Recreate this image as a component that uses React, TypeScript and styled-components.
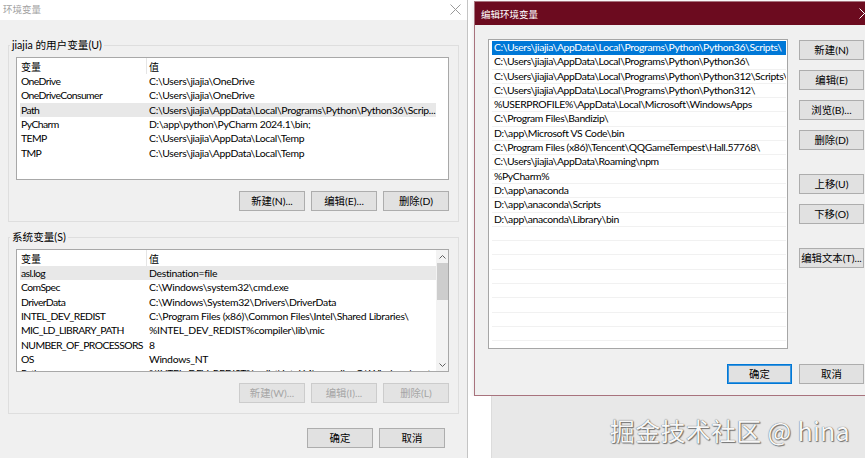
import styled, { createGlobalStyle } from "styled-components";

const UI = `"Lato", "Noto Sans CJK SC", sans-serif`;
const CJK = `"Noto Sans CJK SC", "Lato", sans-serif`;

const GlobalStyle = createGlobalStyle`
  html, body {
    margin: 0;
    padding: 0;
  }
  body {
    width: 865px;
    height: 458px;
    overflow: hidden;
    background: #ffffff;
    font-family: ${UI};
    font-size: 10.4px;
    color: #000;
  }
`;

// data
const userVars = [
  ["OneDrive", "C:\\Users\\jiajia\\OneDrive"],
  ["OneDriveConsumer", "C:\\Users\\jiajia\\OneDrive"],
  ["Path", "C:\\Users\\jiajia\\AppData\\Local\\Programs\\Python\\Python36\\Scrip..."],
  ["PyCharm", "D:\\app\\python\\PyCharm 2024.1\\bin;"],
  ["TEMP", "C:\\Users\\jiajia\\AppData\\Local\\Temp"],
  ["TMP", "C:\\Users\\jiajia\\AppData\\Local\\Temp"],
];

const systemVars = [
  ["asl.log", "Destination=file"],
  ["ComSpec", "C:\\Windows\\system32\\cmd.exe"],
  ["DriverData", "C:\\Windows\\System32\\Drivers\\DriverData"],
  ["INTEL_DEV_REDIST", "C:\\Program Files (x86)\\Common Files\\Intel\\Shared Libraries\\"],
  ["MIC_LD_LIBRARY_PATH", "%INTEL_DEV_REDIST%compiler\\lib\\mic"],
  ["NUMBER_OF_PROCESSORS", "8"],
  ["OS", "Windows_NT"],
  ["Path", "%INTEL_DEV_REDIST%redist\\intel64\\compiler;C:\\Windows\\system32;"],
];

const paths = [
  "C:\\Users\\jiajia\\AppData\\Local\\Programs\\Python\\Python36\\Scripts\\",
  "C:\\Users\\jiajia\\AppData\\Local\\Programs\\Python\\Python36\\",
  "C:\\Users\\jiajia\\AppData\\Local\\Programs\\Python\\Python312\\Scripts\\",
  "C:\\Users\\jiajia\\AppData\\Local\\Programs\\Python\\Python312\\",
  "%USERPROFILE%\\AppData\\Local\\Microsoft\\WindowsApps",
  "C:\\Program Files\\Bandizip\\",
  "D:\\app\\Microsoft VS Code\\bin",
  "C:\\Program Files (x86)\\Tencent\\QQGameTempest\\Hall.57768\\",
  "C:\\Users\\jiajia\\AppData\\Roaming\\npm",
  "%PyCharm%",
  "D:\\app\\anaconda",
  "D:\\app\\anaconda\\Scripts",
  "D:\\app\\anaconda\\Library\\bin",
];

function CloseIcon({ color }: { color: string }) {
  return (
    <svg width="11" height="11" viewBox="0 0 11 11">
      <path d="M0.5 0.5 L10.5 10.5 M10.5 0.5 L0.5 10.5" stroke={color} strokeWidth="1" />
    </svg>
  );
}

function Chevron({ up }: { up?: boolean }) {
  return (
    <svg width="7" height="4" viewBox="0 0 7 4">
      <path
        d={up ? "M0.5 3.5 L3.5 0.5 L6.5 3.5" : "M0.5 0.5 L3.5 3.5 L6.5 0.5"}
        stroke="#606060"
        strokeWidth="1"
        fill="none"
      />
    </svg>
  );
}

function VarList({
  rows,
  selected,
  scroll,
}: {
  rows: string[][];
  selected: number;
  scroll?: boolean;
}) {
  return (
    <ListBox>
      <ListContent>
        <HeaderRow>
          <NameCell $header>变量</NameCell>
          <ValueCell>值</ValueCell>
        </HeaderRow>
        {rows.map(([name, value], i) => (
          <VarRow key={name + i} $selected={i === selected}>
            <NameCell>{name}</NameCell>
            <ValueCell>{value}</ValueCell>
          </VarRow>
        ))}
      </ListContent>
      {scroll && (
        <ScrollBar>
          <ArrowBox>
            <Chevron up />
          </ArrowBox>
          <Thumb />
          <Track />
          <ArrowBox>
            <Chevron />
          </ArrowBox>
        </ScrollBar>
      )}
    </ListBox>
  );
}

export default function App() {
  const emptyRows = Array.from({ length: 10 });
  return (
    <>
      <GlobalStyle />
      <Desktop>
        {/* 环境变量 window */}
        <LeftWindow>
          <TitleBar>
            <TitleText>环境变量</TitleText>
            <CloseIcon color="#9a9a9a" />
          </TitleBar>
          <WindowBody>
            <Group $top={25}>
              <Legend>jiajia 的用户变量(U)</Legend>
              <VarList rows={userVars} selected={2} />
              <ButtonRow>
                <Button>新建(N)...</Button>
                <Button>编辑(E)...</Button>
                <Button>删除(D)</Button>
              </ButtonRow>
            </Group>
            <Group $top={15}>
              <Legend>系统变量(S)</Legend>
              <VarList rows={systemVars} selected={0} scroll />
              <ButtonRow>
                <Button disabled>新建(W)...</Button>
                <Button disabled>编辑(I)...</Button>
                <Button disabled>删除(L)</Button>
              </ButtonRow>
            </Group>
            <Footer>
              <Button>确定</Button>
              <Button>取消</Button>
            </Footer>
          </WindowBody>
        </LeftWindow>

        <RightColumn>
          {/* 编辑环境变量 dialog */}
          <Dialog>
            <DialogTitle>
              <DialogTitleText>编辑环境变量</DialogTitleText>
              <CloseIcon color="#ffffff" />
            </DialogTitle>
            <DialogBody>
              <DialogMain>
                <PathList>
                  {paths.map((p, i) => (
                    <PathRow key={p} $selected={i === 0}>
                      {p}
                    </PathRow>
                  ))}
                  {emptyRows.map((_, i) => (
                    <PathRow key={"e" + i} />
                  ))}
                </PathList>
                <SideButtons>
                  <Button $w={65}>新建(N)</Button>
                  <Button $w={65}>编辑(E)</Button>
                  <Button $w={65}>浏览(B)...</Button>
                  <Button $w={65}>删除(D)</Button>
                  <Button $w={65} $gap={14}>上移(U)</Button>
                  <Button $w={65}>下移(O)</Button>
                  <Button $w={65} $gap={14}>编辑文本(T)...</Button>
                </SideButtons>
              </DialogMain>
              <DialogFooter>
                <Button $w={65} $primary>确定</Button>
                <Button $w={65}>取消</Button>
              </DialogFooter>
            </DialogBody>
          </Dialog>
          <Behind>
            <WhiteStrip />
            <GreyPane>
              <Watermark>掘金技术社区 @ hina</Watermark>
            </GreyPane>
          </Behind>
        </RightColumn>
      </Desktop>
    </>
  );
}

// layout

const Desktop = styled.div`
  display: flex;
  width: 865px;
  height: 458px;
  overflow: hidden;
`;

// left window

const LeftWindow = styled.div`
  flex: none;
  width: 468px;
  height: 458px;
  box-sizing: border-box;
  border-right: 1px solid #c4c4c4;
  display: flex;
  flex-direction: column;
  background: #f0f0f0;
`;

const TitleBar = styled.div`
  height: 20px;
  background: #ffffff;
  display: flex;
  align-items: center;
  justify-content: space-between;
  padding: 0 6px 2px 3px;
  box-sizing: border-box;
`;

const TitleText = styled.span`
  font-family: ${CJK};
  font-size: 9.5px;
  color: #a2a2a2;
`;

const WindowBody = styled.div`
  flex: 1;
  padding: 0 8px;
  display: flex;
  flex-direction: column;
`;

const Group = styled.div<{ $top: number }>`
  margin-top: ${(p) => p.$top}px;
  border: 1px solid #dedede;
  padding: 0 9px 10px 7px;
  display: flex;
  flex-direction: column;
`;

const Legend = styled.div`
  align-self: flex-start;
  height: 16px;
  line-height: 16px;
  margin: -9px 0 4px -6px;
  padding: 0 2px;
  background: #f0f0f0;
  font-family: ${UI};
  font-size: 10.6px;
  color: #000;
`;

const ListBox = styled.div`
  box-sizing: border-box;
  height: 123px;
  border: 1px solid #a8a8a8;
  background: #ffffff;
  display: flex;
  padding-left: 3px;
  overflow: hidden;
`;

const ListContent = styled.div`
  width: 416px;
  overflow: hidden;
`;

const HeaderRow = styled.div`
  display: flex;
  align-items: center;
  height: 16px;
  font-family: ${CJK};
  font-size: 10px;
`;

const VarRow = styled.div<{ $selected?: boolean }>`
  display: flex;
  align-items: center;
  height: 14.3px;
  background: ${(p) => (p.$selected ? "#e8e8e8" : "transparent")};
  white-space: nowrap;
  letter-spacing: -0.3px;
`;

const NameCell = styled.div<{ $header?: boolean }>`
  flex: none;
  width: 127px;
  box-sizing: border-box;
  padding-left: 1px;
  overflow: hidden;
  align-self: stretch;
  display: flex;
  align-items: center;
  letter-spacing: ${(p) => (p.$header ? "0" : "-0.6px")};
  border-right: 1px solid ${(p) => (p.$header ? "#e5e5e5" : "transparent")};
`;

const ValueCell = styled.div`
  flex: 1;
  padding-left: 2px;
  overflow: hidden;
  white-space: nowrap;
`;

const ScrollBar = styled.div`
  width: 12px;
  margin-left: auto;
  background: #f3f3f3;
  display: flex;
  flex-direction: column;
`;

const ArrowBox = styled.div`
  height: 13px;
  display: flex;
  align-items: center;
  justify-content: center;
`;

const Thumb = styled.div`
  height: 37px;
  margin: 0 0 0 1px;
  background: #cdcdcd;
`;

const Track = styled.div`
  flex: 1;
`;

const ButtonRow = styled.div`
  display: flex;
  justify-content: flex-end;
  gap: 6px;
  margin-top: 11px;
`;

const Button = styled.button<{ $w?: number; $primary?: boolean; $gap?: number }>`
  flex: none;
  box-sizing: border-box;
  width: ${(p) => p.$w ?? 66}px;
  height: 20px;
  margin-top: ${(p) => p.$gap ?? 0}px;
  padding: 0;
  background: #e1e1e1;
  border: 1px solid ${(p) => (p.$primary ? "#0078d7" : "#adadad")};
  box-shadow: ${(p) => (p.$primary ? "inset 0 0 0 1px #3c95dc" : "none")};
  font-family: ${UI};
  font-size: 10.4px;
  line-height: 18px;
  color: #000;
  white-space: nowrap;

  &:disabled {
    color: #a6a6a6;
    border-color: #cccccc;
    background: #e3e3e3;
  }
`;

const Footer = styled.div`
  display: flex;
  justify-content: flex-end;
  gap: 6px;
  margin-top: 14px;
  padding-right: 14px;
`;

// right side

const RightColumn = styled.div`
  flex: 1;
  display: flex;
  flex-direction: column;
  background: #ffffff;
  min-width: 0;
`;

const Dialog = styled.div`
  flex: none;
  width: 400px;
  height: 395px;
  margin: 1px 0 0 6px;
  box-sizing: border-box;
  border: 1px solid #a8737d;
  background: #f0f0f0;
  display: flex;
  flex-direction: column;
  box-shadow: 0 2px 6px rgba(0, 0, 0, 0.12);
`;

const DialogTitle = styled.div`
  height: 23px;
  background: #6c0b1f;
  display: flex;
  align-items: center;
  justify-content: space-between;
  padding: 0 3px 0 6px;
`;

const DialogTitleText = styled.span`
  font-family: ${CJK};
  font-size: 9.5px;
  color: #ffffff;
`;

const DialogBody = styled.div`
  flex: 1;
  padding: 14px 9px 0 13px;
  display: flex;
  flex-direction: column;
`;

const DialogMain = styled.div`
  display: flex;
  gap: 11px;
`;

const PathList = styled.div`
  flex: none;
  box-sizing: border-box;
  width: 300px;
  height: 310px;
  border: 1px solid #a6a6a6;
  background: #ffffff;
  padding: 1px 1px 0 3px;
  overflow: hidden;
`;

const PathRow = styled.div<{ $selected?: boolean }>`
  box-sizing: border-box;
  height: 14.3px;
  line-height: 13.3px;
  padding-left: 2px;
  border-bottom: 1px solid ${(p) => (p.$selected ? "#0078d7" : "#f1f1f1")};
  background: ${(p) => (p.$selected ? "#0078d7" : "transparent")};
  color: ${(p) => (p.$selected ? "#ffffff" : "#000000")};
  letter-spacing: -0.36px;
  white-space: nowrap;
  overflow: hidden;
`;

const SideButtons = styled.div`
  display: flex;
  flex-direction: column;
  gap: 10px;
  padding-top: 1px;
`;

const DialogFooter = styled.div`
  display: flex;
  justify-content: flex-end;
  gap: 7px;
  margin-top: 15px;
`;

const Behind = styled.div`
  flex: 1;
  display: flex;
`;

const WhiteStrip = styled.div`
  width: 23px;
  background: #ffffff;
`;

const GreyPane = styled.div`
  flex: 1;
  border-left: 1px solid #dcdcdc;
  background: #e8e8e8;
  display: flex;
  align-items: center;
  justify-content: flex-end;
  padding: 6px 15px 0 0;
`;

const Watermark = styled.div`
  font-family: ${CJK};
  font-size: 25px;
  color: #f7f7f7;
  letter-spacing: 0.3px;
  text-shadow: 0 0 1px #3a3a3a, 1px 1px 1px #777777;
  white-space: nowrap;
`;
